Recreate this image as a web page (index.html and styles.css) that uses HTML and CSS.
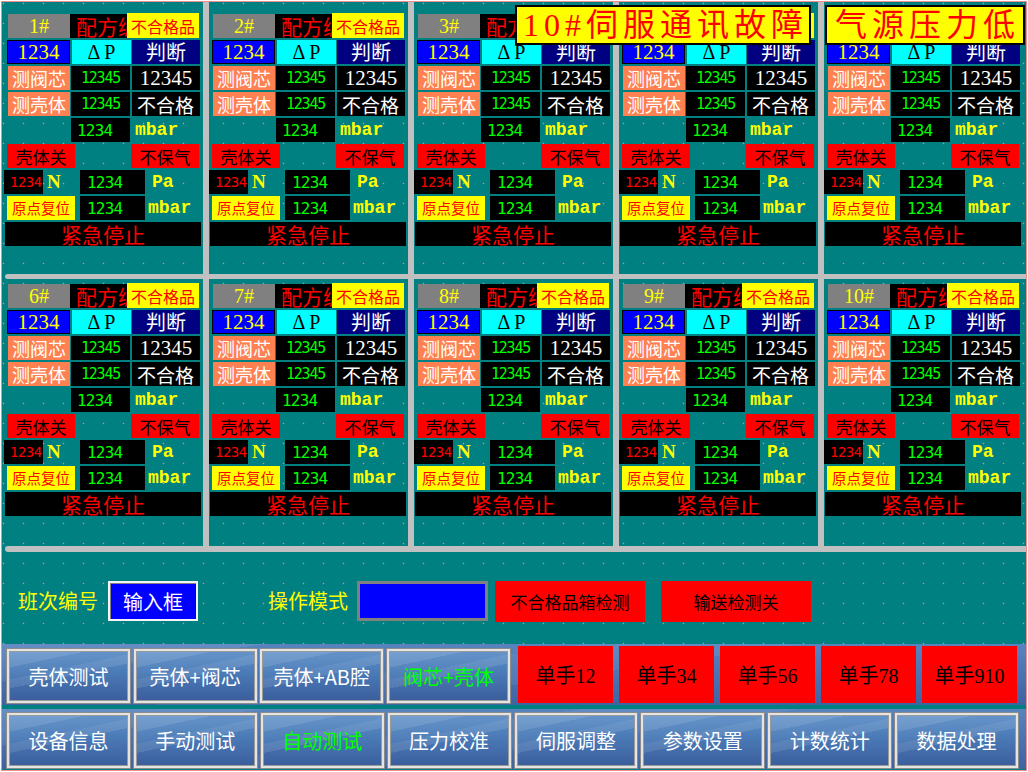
FILE: index.html
```html
<!DOCTYPE html>
<html lang="zh">
<head>
<meta charset="utf-8">
<title>HMI</title>
<link rel="stylesheet" href="styles.css">
</head>
<body>
<div class="screen">
  <div class="prow top">
    <div class="panel">
      <div class="r"><div class="c num">1#</div><div class="c recipe">配方编号</div><div class="c ng">不合格品</div></div>
      <div class="r"><div class="c vb">1234</div><div class="c dp">Δ P</div><div class="c jd">判断</div></div>
      <div class="r"><div class="c tag">测阀芯</div><div class="c gm">12345</div><div class="c wv">12345</div></div>
      <div class="r"><div class="c tag">测壳体</div><div class="c gm">12345</div><div class="c wv cj">不合格</div></div>
      <div class="r"><div class="c ge">1234</div><span class="unit u1">mbar</span></div>
      <div class="r"><div class="c rbtn">壳体关</div><div class="c rbtn r2">不保气</div></div>
      <div class="r"><div class="c rsm">1234</div><span class="c nu">N</span><div class="c gb">1234</div><span class="unit pa">Pa</span></div>
      <div class="r"><div class="c home">原点复位</div><div class="c gb h">1234</div><span class="unit mb2">mbar</span></div>
      <div class="r"><div class="c estop">紧急停止</div></div>
    </div>
    <div class="vbar"></div>
    <div class="panel">
      <div class="r"><div class="c num">2#</div><div class="c recipe">配方编号</div><div class="c ng">不合格品</div></div>
      <div class="r"><div class="c vb">1234</div><div class="c dp">Δ P</div><div class="c jd">判断</div></div>
      <div class="r"><div class="c tag">测阀芯</div><div class="c gm">12345</div><div class="c wv">12345</div></div>
      <div class="r"><div class="c tag">测壳体</div><div class="c gm">12345</div><div class="c wv cj">不合格</div></div>
      <div class="r"><div class="c ge">1234</div><span class="unit u1">mbar</span></div>
      <div class="r"><div class="c rbtn">壳体关</div><div class="c rbtn r2">不保气</div></div>
      <div class="r"><div class="c rsm">1234</div><span class="c nu">N</span><div class="c gb">1234</div><span class="unit pa">Pa</span></div>
      <div class="r"><div class="c home">原点复位</div><div class="c gb h">1234</div><span class="unit mb2">mbar</span></div>
      <div class="r"><div class="c estop">紧急停止</div></div>
    </div>
    <div class="vbar"></div>
    <div class="panel">
      <div class="r"><div class="c num">3#</div><div class="c recipe">配方编号</div><div class="c ng">不合格品</div></div>
      <div class="r"><div class="c vb">1234</div><div class="c dp">Δ P</div><div class="c jd">判断</div></div>
      <div class="r"><div class="c tag">测阀芯</div><div class="c gm">12345</div><div class="c wv">12345</div></div>
      <div class="r"><div class="c tag">测壳体</div><div class="c gm">12345</div><div class="c wv cj">不合格</div></div>
      <div class="r"><div class="c ge">1234</div><span class="unit u1">mbar</span></div>
      <div class="r"><div class="c rbtn">壳体关</div><div class="c rbtn r2">不保气</div></div>
      <div class="r"><div class="c rsm">1234</div><span class="c nu">N</span><div class="c gb">1234</div><span class="unit pa">Pa</span></div>
      <div class="r"><div class="c home">原点复位</div><div class="c gb h">1234</div><span class="unit mb2">mbar</span></div>
      <div class="r"><div class="c estop">紧急停止</div></div>
    </div>
    <div class="vbar"></div>
    <div class="panel">
      <div class="r"><div class="c num">4#</div><div class="c recipe">配方编号</div><div class="c ng">不合格品</div></div>
      <div class="r"><div class="c vb">1234</div><div class="c dp">Δ P</div><div class="c jd">判断</div></div>
      <div class="r"><div class="c tag">测阀芯</div><div class="c gm">12345</div><div class="c wv">12345</div></div>
      <div class="r"><div class="c tag">测壳体</div><div class="c gm">12345</div><div class="c wv cj">不合格</div></div>
      <div class="r"><div class="c ge">1234</div><span class="unit u1">mbar</span></div>
      <div class="r"><div class="c rbtn">壳体关</div><div class="c rbtn r2">不保气</div></div>
      <div class="r"><div class="c rsm">1234</div><span class="c nu">N</span><div class="c gb">1234</div><span class="unit pa">Pa</span></div>
      <div class="r"><div class="c home">原点复位</div><div class="c gb h">1234</div><span class="unit mb2">mbar</span></div>
      <div class="r"><div class="c estop">紧急停止</div></div>
    </div>
    <div class="vbar"></div>
    <div class="panel">
      <div class="r"><div class="c num">5#</div><div class="c recipe">配方编号</div><div class="c ng">不合格品</div></div>
      <div class="r"><div class="c vb">1234</div><div class="c dp">Δ P</div><div class="c jd">判断</div></div>
      <div class="r"><div class="c tag">测阀芯</div><div class="c gm">12345</div><div class="c wv">12345</div></div>
      <div class="r"><div class="c tag">测壳体</div><div class="c gm">12345</div><div class="c wv cj">不合格</div></div>
      <div class="r"><div class="c ge">1234</div><span class="unit u1">mbar</span></div>
      <div class="r"><div class="c rbtn">壳体关</div><div class="c rbtn r2">不保气</div></div>
      <div class="r"><div class="c rsm">1234</div><span class="c nu">N</span><div class="c gb">1234</div><span class="unit pa">Pa</span></div>
      <div class="r"><div class="c home">原点复位</div><div class="c gb h">1234</div><span class="unit mb2">mbar</span></div>
      <div class="r"><div class="c estop">紧急停止</div></div>
    </div>
  </div>
  <div class="hbar"></div>
  <div class="prow bot">
    <div class="panel">
      <div class="r"><div class="c num">6#</div><div class="c recipe">配方编号</div><div class="c ng">不合格品</div></div>
      <div class="r"><div class="c vb">1234</div><div class="c dp">Δ P</div><div class="c jd">判断</div></div>
      <div class="r"><div class="c tag">测阀芯</div><div class="c gm">12345</div><div class="c wv">12345</div></div>
      <div class="r"><div class="c tag">测壳体</div><div class="c gm">12345</div><div class="c wv cj">不合格</div></div>
      <div class="r"><div class="c ge">1234</div><span class="unit u1">mbar</span></div>
      <div class="r"><div class="c rbtn">壳体关</div><div class="c rbtn r2">不保气</div></div>
      <div class="r"><div class="c rsm">1234</div><span class="c nu">N</span><div class="c gb">1234</div><span class="unit pa">Pa</span></div>
      <div class="r"><div class="c home">原点复位</div><div class="c gb h">1234</div><span class="unit mb2">mbar</span></div>
      <div class="r"><div class="c estop">紧急停止</div></div>
    </div>
    <div class="vbar"></div>
    <div class="panel">
      <div class="r"><div class="c num">7#</div><div class="c recipe">配方编号</div><div class="c ng">不合格品</div></div>
      <div class="r"><div class="c vb">1234</div><div class="c dp">Δ P</div><div class="c jd">判断</div></div>
      <div class="r"><div class="c tag">测阀芯</div><div class="c gm">12345</div><div class="c wv">12345</div></div>
      <div class="r"><div class="c tag">测壳体</div><div class="c gm">12345</div><div class="c wv cj">不合格</div></div>
      <div class="r"><div class="c ge">1234</div><span class="unit u1">mbar</span></div>
      <div class="r"><div class="c rbtn">壳体关</div><div class="c rbtn r2">不保气</div></div>
      <div class="r"><div class="c rsm">1234</div><span class="c nu">N</span><div class="c gb">1234</div><span class="unit pa">Pa</span></div>
      <div class="r"><div class="c home">原点复位</div><div class="c gb h">1234</div><span class="unit mb2">mbar</span></div>
      <div class="r"><div class="c estop">紧急停止</div></div>
    </div>
    <div class="vbar"></div>
    <div class="panel">
      <div class="r"><div class="c num">8#</div><div class="c recipe">配方编号</div><div class="c ng">不合格品</div></div>
      <div class="r"><div class="c vb">1234</div><div class="c dp">Δ P</div><div class="c jd">判断</div></div>
      <div class="r"><div class="c tag">测阀芯</div><div class="c gm">12345</div><div class="c wv">12345</div></div>
      <div class="r"><div class="c tag">测壳体</div><div class="c gm">12345</div><div class="c wv cj">不合格</div></div>
      <div class="r"><div class="c ge">1234</div><span class="unit u1">mbar</span></div>
      <div class="r"><div class="c rbtn">壳体关</div><div class="c rbtn r2">不保气</div></div>
      <div class="r"><div class="c rsm">1234</div><span class="c nu">N</span><div class="c gb">1234</div><span class="unit pa">Pa</span></div>
      <div class="r"><div class="c home">原点复位</div><div class="c gb h">1234</div><span class="unit mb2">mbar</span></div>
      <div class="r"><div class="c estop">紧急停止</div></div>
    </div>
    <div class="vbar"></div>
    <div class="panel">
      <div class="r"><div class="c num">9#</div><div class="c recipe">配方编号</div><div class="c ng">不合格品</div></div>
      <div class="r"><div class="c vb">1234</div><div class="c dp">Δ P</div><div class="c jd">判断</div></div>
      <div class="r"><div class="c tag">测阀芯</div><div class="c gm">12345</div><div class="c wv">12345</div></div>
      <div class="r"><div class="c tag">测壳体</div><div class="c gm">12345</div><div class="c wv cj">不合格</div></div>
      <div class="r"><div class="c ge">1234</div><span class="unit u1">mbar</span></div>
      <div class="r"><div class="c rbtn">壳体关</div><div class="c rbtn r2">不保气</div></div>
      <div class="r"><div class="c rsm">1234</div><span class="c nu">N</span><div class="c gb">1234</div><span class="unit pa">Pa</span></div>
      <div class="r"><div class="c home">原点复位</div><div class="c gb h">1234</div><span class="unit mb2">mbar</span></div>
      <div class="r"><div class="c estop">紧急停止</div></div>
    </div>
    <div class="vbar"></div>
    <div class="panel">
      <div class="r"><div class="c num">10#</div><div class="c recipe">配方编号</div><div class="c ng">不合格品</div></div>
      <div class="r"><div class="c vb">1234</div><div class="c dp">Δ P</div><div class="c jd">判断</div></div>
      <div class="r"><div class="c tag">测阀芯</div><div class="c gm">12345</div><div class="c wv">12345</div></div>
      <div class="r"><div class="c tag">测壳体</div><div class="c gm">12345</div><div class="c wv cj">不合格</div></div>
      <div class="r"><div class="c ge">1234</div><span class="unit u1">mbar</span></div>
      <div class="r"><div class="c rbtn">壳体关</div><div class="c rbtn r2">不保气</div></div>
      <div class="r"><div class="c rsm">1234</div><span class="c nu">N</span><div class="c gb">1234</div><span class="unit pa">Pa</span></div>
      <div class="r"><div class="c home">原点复位</div><div class="c gb h">1234</div><span class="unit mb2">mbar</span></div>
      <div class="r"><div class="c estop">紧急停止</div></div>
    </div>
  </div>
  <div class="hbar thick"></div>

  <div class="ctrl">
    <span class="lbl">班次编号</span>
    <div class="inbox">输入框</div>
    <span class="lbl lbl2">操作模式</span>
    <div class="mode"></div>
    <div class="chk">不合格品箱检测</div>
    <div class="chk c2">输送检测关</div>
  </div>

  <div class="band band1">
    <div class="bgroup">
      <div class="btn">壳体测试</div>
      <div class="btn">壳体+阀芯</div>
      <div class="btn">壳体+AB腔</div>
      <div class="btn on">阀芯+壳体</div>
    </div>
    <div class="reds">
      <div class="red">单手12</div>
      <div class="red">单手34</div>
      <div class="red">单手56</div>
      <div class="red">单手78</div>
      <div class="red">单手910</div>
    </div>
  </div>
  <div class="bandgap"></div>
  <div class="band band2">
    <div class="btn">设备信息</div>
    <div class="btn">手动测试</div>
    <div class="btn on">自动测试</div>
    <div class="btn">压力校准</div>
    <div class="btn">伺服调整</div>
    <div class="btn">参数设置</div>
    <div class="btn">计数统计</div>
    <div class="btn">数据处理</div>
  </div>

  <div class="alert a1">10#伺服通讯故障</div>
  <div class="alert a2">气源压力低</div>
</div>
</body>
</html>
```

FILE: styles.css
```css
* { box-sizing: border-box; margin: 0; padding: 0; }
body { background: #fff; font-family: "Noto Sans CJK SC", sans-serif; }

.screen {
  position: relative;
  margin: 1px 0 0 1px;
  width: 1026px;
  height: 770px;
  border: 1px solid #f08c8c;
  background-color: #008080;
  background-image: radial-gradient(circle at 10.5px 10.5px, #f08080 0.6px, transparent 1.1px);
  background-size: 20px 20px;
  background-position: 11px 11px;
  display: flex;
  flex-direction: column;
  overflow: hidden;
}

/* panel grid */
.prow { display: flex; padding-left: 2px; height: 272px; flex: none; }
.prow.bot { height: 267px; }
.panel { width: 199px; flex: none; padding-top: 12px; display: flex; flex-direction: column; gap: 2px; }
.prow.bot .panel { padding-top: 5px; }
.vbar { width: 6px; flex: none; background: #c0c0c0; }
.hbar { height: 5px; flex: none; margin-left: 3px; background: #c0c0c0; border-radius: 3px 0 0 3px; }
.hbar.thick { height: 6px; }

.r { display: flex; height: 24px; flex: none; }
.c {
  display: flex; align-items: center; justify-content: center;
  white-space: nowrap; overflow: hidden; flex: none; line-height: 1;
}

.num { margin-left: 4px; width: 62px; background: #808080; color: #ff0; font: 20px "Liberation Serif", serif; }
.recipe { width: 57px; background: #000; color: #f00; font-size: 21px; justify-content: flex-start; padding-left: 6px; }
.ng { width: 72px; height: 25px; margin-top: -1px; background: #ff0; color: #f00; font-size: 16px; }

.vb { margin-left: 3px; width: 63px; background: #00f; border: 1px solid #000; color: #ff0; font: 21px "Liberation Serif", serif; }
.dp { margin-left: 2px; width: 59px; background: #0ff; color: #000; font: 20px "Liberation Serif", serif; }
.jd { margin-left: 1px; width: 68px; background: #000080; color: #fff; font-size: 20px; }

.tag { margin-left: 4px; width: 62px; background: #ff8050; color: #fff; font-size: 18px; }
.gm { margin-left: 1px; width: 59px; background: #000; color: #0f0; font: 15px "DejaVu Sans Mono", monospace; letter-spacing: -1.2px; }
.wv { margin-left: 2px; width: 68px; background: #000; color: #fff; font: 21px "Liberation Serif", serif; }
.wv.cj { font: 19px "Noto Sans CJK SC", sans-serif; justify-content: flex-start; padding-left: 5px; }

.ge { margin-left: 67px; width: 59px; background: #000; color: #0f0; font: 16px "DejaVu Sans Mono", monospace; letter-spacing: -0.8px; justify-content: flex-start; padding-left: 6px; }
.unit { display: flex; align-items: center; color: #ff0; font: bold 18px "Liberation Mono", monospace; }
.u1 { margin-left: 5px; }
.pa { margin-left: 7px; }
.mb2 { margin-left: 3px; }

.rbtn { margin-left: 3px; width: 68px; background: #f00; color: #000; font-size: 17px; }
.rbtn.r2 { margin-left: 56px; }

.rsm { width: 39px; background: #000; color: #f00; font: 14px "DejaVu Sans Mono", monospace; letter-spacing: -0.5px; justify-content: flex-start; padding-left: 6px; }
.nu { margin-left: 4px; width: 33px; color: #ff0; font: bold 19px "Liberation Serif", serif; justify-content: flex-start; }
.gb { width: 65px; background: #000; color: #0f0; font: 16px "DejaVu Sans Mono", monospace; letter-spacing: -0.8px; justify-content: flex-start; padding-left: 7px; }
.gb.h { margin-left: 5px; }
.home { margin-left: 3px; width: 68px; background: #ff0; color: #f00; font-size: 14.5px; }
.estop { margin-left: 1px; width: 196px; background: #000; color: #f00; font-size: 21px; }

/* controls row */
.ctrl { height: 92px; flex: none; display: flex; align-items: flex-start; padding-top: 29px; }
.lbl { color: #ff0; font-size: 20px; line-height: 40px; margin-left: 16px; }
.lbl2 { margin-left: 70px; }
.inbox {
  margin-left: 10px; width: 90px; height: 40px;
  background: #00f; color: #fff; font-size: 20px;
  border: 2px solid #f4f4f4; box-shadow: inset 1px 1px 0 #808080;
  display: flex; align-items: center; justify-content: center;
}
.mode { margin-left: 9px; width: 131px; height: 40px; background: #00f; border: 3px solid #808080; }
.chk {
  margin-left: 7px; width: 150px; height: 41px;
  background: #f00; color: #000; font-size: 17px;
  display: flex; align-items: center; justify-content: center;
}
.chk.c2 { margin-left: 16px; }

/* button bands */
.band {
  display: flex; flex: none; padding-left: 5px;
  background:
    linear-gradient(172deg, rgba(255,255,255,0.08) 0 18%, transparent 18% 40%, rgba(255,255,255,0.06) 40% 55%, transparent 55%),
    linear-gradient(180deg, #5884be, #3e63a2);
}
.band1 { height: 61px; align-items: flex-start; }
.bandgap { height: 4px; flex: none; }
.band2 { height: 60px; padding-top: 4px; gap: 4px; }
.bgroup { display: flex; gap: 3.667px; margin-top: 5px; }

.btn {
  display: flex; align-items: center; justify-content: center;
  color: #fff; font-size: 20px; white-space: nowrap;
  border: 2px solid #e4e4e4;
  box-shadow: 0 0 0 1px #8c8c8c, inset 0 0 0 1px #9a9a9a;
  background:
    linear-gradient(168deg, rgba(255,255,255,0.14) 0 22%, rgba(255,255,255,0.04) 22% 38%, rgba(255,255,255,0.10) 38% 50%, transparent 50%),
    linear-gradient(180deg, #5f90c8 0%, #4a7ab6 45%, #3b5d9c 100%);
}
.btn.on { color: #00ff00; }
.band1 .btn { width: 123px; height: 54px; }
.band2 .btn { width: 122.875px; height: 55px; }

.reds { display: flex; gap: 6px; margin-left: 8px; margin-top: 2px; }
.red {
  width: 95px; height: 57px; background: #f00; color: #000;
  font: 20px "Liberation Serif", "Noto Sans CJK SC", serif;
  display: flex; align-items: center; justify-content: center;
}

/* alarm overlays */
.alert {
  position: absolute; top: 3px; height: 40px;
  background: #ff0; border: 2px solid #000; color: #f00;
  font: 32px "Liberation Serif", "Noto Sans CJK SC", serif;
  letter-spacing: 5px; padding-left: 5px;
  display: flex; align-items: center; justify-content: center;
  line-height: 1; white-space: nowrap;
}
.a1 { left: 513px; width: 296px; }
.a2 { left: 823px; width: 200px; }
```
